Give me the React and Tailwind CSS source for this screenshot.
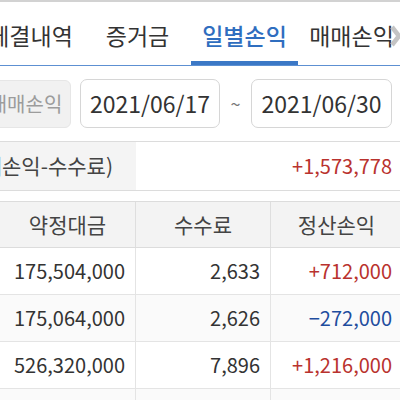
import React from "react";

const tabs = ["체결내역", "증거금", "일별손익", "매매손익"];

const rows = [
  { amount: "175,504,000", fee: "2,633", pnl: "+712,000", up: true },
  { amount: "175,064,000", fee: "2,626", pnl: "−272,000", up: false },
  { amount: "526,320,000", fee: "7,896", pnl: "+1,216,000", up: true },
  { amount: "", fee: "", pnl: "", up: true },
];

const App = () => {
  return (
    <div
      className="relative w-[400px] h-[400px] overflow-hidden bg-white text-[#333]"
      style={{ fontFamily: '"Noto Sans CJK KR", "Noto Sans", sans-serif' }}
    >
      {/* Tabs */}
      <div className="border-t-2 border-[#d2d2d2] border-b border-b-[#5d90d2]">
        <div className="flex ml-[-23px]">
          {tabs.map((t, i) => (
            <div
              key={t}
              className={
                i === 2
                  ? "w-[107px] shrink-0 h-[63px] pt-[7px] flex items-center justify-center border-b-4 border-[#3b78c6] text-[#2f6ebf] text-[23px] font-medium whitespace-nowrap"
                  : "w-[107px] shrink-0 h-[63px] pt-[7px] flex items-center justify-center border-b-4 border-transparent text-[#333] text-[23px] whitespace-nowrap"
              }
            >
              {t}
            </div>
          ))}
        </div>
      </div>
      <svg
        className="absolute right-[-2px] top-[25px]"
        width="12"
        height="22"
        viewBox="0 0 12 22"
      >
        <polyline
          points="2,2 9,11 2,20"
          fill="none"
          stroke="#c4c4c4"
          strokeWidth="4.5"
          strokeLinejoin="round"
        />
      </svg>

      {/* Date range */}
      <div className="flex items-center mt-[13px] ml-[-20px]">
        <div className="w-[91px] h-[48px] shrink-0 rounded-md bg-[#f1f1f1] border border-[#e6e6e6] flex items-center justify-center text-[20px] text-[#9c9c9c] whitespace-nowrap">
          매매손익
        </div>
        <div className="ml-[9px] w-[140px] h-[49px] shrink-0 rounded-[7px] border border-[#d6d6d6] flex items-center justify-center text-[23px] text-[#333]">
          2021/06/17
        </div>
        <div className="w-[31px] shrink-0 text-center text-[18px] text-[#777]">~</div>
        <div className="w-[141px] h-[49px] shrink-0 rounded-[7px] border border-[#d6d6d6] flex items-center justify-center text-[23px] text-[#333]">
          2021/06/30
        </div>
      </div>

      {/* Summary */}
      <div className="mt-[13px] flex h-[50px] border-y border-[#dcdcdc]">
        <div className="w-[136px] shrink-0 bg-[#f4f4f4] flex items-center justify-end pr-[23px] overflow-hidden whitespace-nowrap text-[21px] text-[#444]">
          정산손익(매매손익-수수료)
        </div>
        <div className="flex-1 flex items-center justify-end pr-[8px] text-[20px] text-[#b9322e]">
          +1,573,778
        </div>
      </div>

      {/* Table */}
      <div className="mt-[10px] w-[402px] border-t border-[#dcdcdc]">
        <div className="grid grid-cols-[136px_135px_131px] h-[46px] bg-[#f3f3f3] border-b border-[#dcdcdc] text-[21px] text-[#444]">
          <div className="flex items-center justify-center border-r border-[#dedede]">약정대금</div>
          <div className="flex items-center justify-center border-r border-[#dedede]">수수료</div>
          <div className="flex items-center justify-center">정산손익</div>
        </div>
        {rows.map((r, i) => (
          <div
            key={i}
            className={
              i % 2 === 1
                ? "grid grid-cols-[136px_135px_131px] h-[47px] bg-[#fafafa] border-b border-[#e4e4e4] text-[20px]"
                : "grid grid-cols-[136px_135px_131px] h-[47px] bg-white border-b border-[#e4e4e4] text-[20px]"
            }
          >
            <div className="flex items-center justify-end pr-[10px] border-r border-[#e4e4e4] text-[#333]">
              {r.amount}
            </div>
            <div className="flex items-center justify-end pr-[10px] border-r border-[#e4e4e4] text-[#333]">
              {r.fee}
            </div>
            <div
              className={
                r.up
                  ? "flex items-center justify-end pr-[10px] text-[#b9322e]"
                  : "flex items-center justify-end pr-[10px] text-[#1f4d9e]"
              }
            >
              {r.pnl}
            </div>
          </div>
        ))}
      </div>
    </div>
  );
};

export default App;
